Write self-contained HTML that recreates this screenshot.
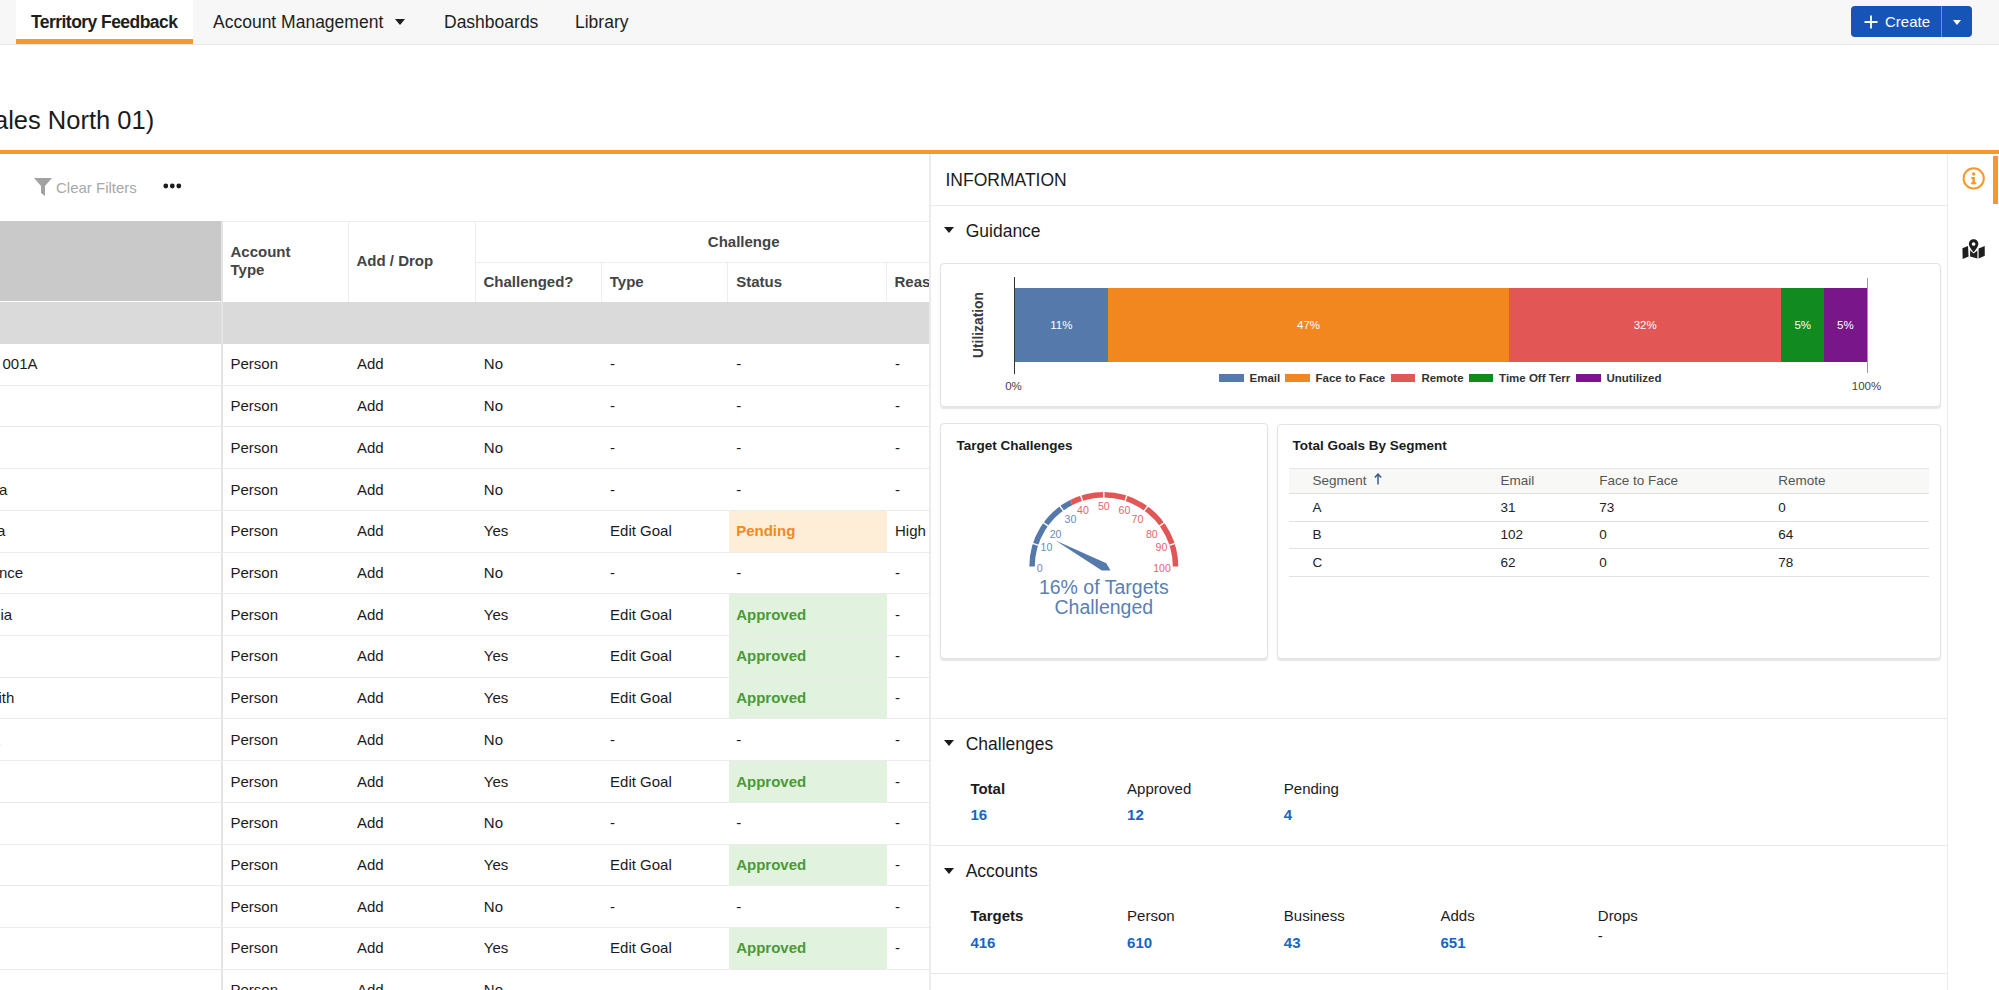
<!DOCTYPE html>
<html><head><meta charset="utf-8">
<style>
*{box-sizing:border-box;margin:0;padding:0}
html,body{width:1999px;height:990px;overflow:hidden;background:#fff;font-family:"Liberation Sans",sans-serif;color:#1b1b1b}
.a{position:absolute;white-space:nowrap}
#nav{position:absolute;left:0;top:0;width:1999px;height:45px;background:#f7f7f7;border-bottom:1px solid #e8e8e8}
.tab{position:absolute;top:0;height:44px;font-size:17.5px;line-height:44px;color:#1e1e1e}
#create{position:absolute;left:1851px;top:6px;width:121px;height:31px;background:#1654b8;border-radius:4px}
.th{font-weight:700;font-size:15px;color:#444}
.td{font-size:15px;color:#1b1b1b}
.hline{position:absolute;height:1px;background:#e6e6e6}
.vline{position:absolute;width:1px;background:#e6e6e6}
.sec{font-size:17.5px;color:#1b1b1b}
.tri{position:absolute;width:0;height:0;border-left:5px solid transparent;border-right:5px solid transparent;border-top:6px solid #1b1b1b}
.card{position:absolute;border:1px solid #e3e3e3;border-radius:4px;background:#fff;box-shadow:0 1.5px 1.5px rgba(0,0,0,.1)}
.lbl{font-size:15px;color:#1b1b1b}
.num{font-size:15px;font-weight:700;color:#1566c8}
</style></head><body>

<!-- NAV -->
<div id="nav">
  <div class="a" style="left:16px;top:0;width:177px;height:44px;background:#fff"></div>
  <div class="a" style="left:16px;top:39px;width:177px;height:5px;background:#f7982e"></div>
  <div class="tab a" style="left:31px;font-weight:700;letter-spacing:-0.55px">Territory Feedback</div>
  <div class="tab a" style="left:213px">Account Management</div>
  <div class="tri" style="left:395px;top:19px"></div>
  <div class="tab a" style="left:444px">Dashboards</div>
  <div class="tab a" style="left:575px">Library</div>
  <div id="create">
    <svg class="a" style="left:13px;top:9px" width="14" height="14" viewBox="0 0 14 14"><path d="M7 0.5V13.5M0.5 7H13.5" stroke="#fff" stroke-width="1.8"/></svg>
    <div class="a" style="left:34px;top:-0.5px;line-height:31px;font-size:15px;color:#fff">Create</div>
    <div class="a" style="left:89.5px;top:0;width:1.5px;height:31px;background:#6a92d4"></div>
    <div class="tri" style="left:102px;top:13.5px;border-top-color:#fff;border-left-width:4.3px;border-right-width:4.3px;border-top-width:5.2px"></div>
  </div>
</div>

<!-- TITLE -->
<div class="a" style="left:-6px;top:104px;font-size:25.5px;line-height:32px;color:#1b1b1b">ales North 01)</div>
<div class="a" style="left:0;top:150px;width:1999px;height:4px;background:#f7982e"></div>

<!-- LEFT PANEL TOOLBAR -->
<svg class="a" style="left:34px;top:178px" width="18" height="18" viewBox="0 0 18 18"><path d="M0 0H18L11 8V18L7 15V8Z" fill="#a2a2a2"/></svg>
<div class="a" style="left:56px;top:178.5px;font-size:15px;line-height:18px;color:#a8a8a8">Clear Filters</div>
<svg class="a" style="left:163px;top:183px" width="19" height="6" viewBox="0 0 19 6"><circle cx="2.8" cy="3" r="2.4" fill="#1b1b1b"/><circle cx="9.3" cy="3" r="2.4" fill="#1b1b1b"/><circle cx="15.8" cy="3" r="2.4" fill="#1b1b1b"/></svg>

<div id="table" class="a" style="left:0;top:0;width:929px;height:990px;overflow:hidden"><div class="a" style="left:0;top:221px;width:221px;height:80px;background:#c9c9c9"></div>
<div class="hline" style="left:222px;top:220.5px;width:707px;height:1.5px;background:#eeeeee"></div>
<div class="a" style="left:0;top:301.5px;width:929px;height:42px;background:#dadada"></div>
<div class="a" style="left:220.5px;top:221px;width:2px;height:769px;background:#e4e4e6"></div>
<div class="vline" style="left:348px;top:221px;height:80.5px;background:#ededed"></div>
<div class="vline" style="left:475px;top:221px;height:80.5px;background:#ededed"></div>
<div class="vline" style="left:601px;top:262px;height:39.5px;background:#ededed"></div>
<div class="vline" style="left:727px;top:262px;height:39.5px;background:#ededed"></div>
<div class="vline" style="left:886px;top:262px;height:39px;background:#ededed"></div>
<div class="hline" style="left:475.3px;top:262px;width:454px;background:#ededed"></div>
<div class="a th" style="left:230.5px;top:243px;line-height:17.7px">Account<br>Type</div>
<div class="a th" style="left:356.5px;top:252px;line-height:18px">Add / Drop</div>
<div class="a th" style="left:707.8px;top:232.8px;line-height:18px">Challenge</div>
<div class="a th" style="left:483.5px;top:272.5px;line-height:18px">Challenged?</div>
<div class="a th" style="left:609.8px;top:272.5px;line-height:18px">Type</div>
<div class="a th" style="left:736.2px;top:272.5px;line-height:18px">Status</div>
<div class="a th" style="left:894.5px;top:272.5px;line-height:18px">Reason</div>
<div class="hline" style="left:0;top:384.72px;width:929px;background:#ebebeb"></div>
<div class="a td" style="left:2.5px;top:355.36px;line-height:18px">001A</div>
<div class="a td" style="left:230.5px;top:355.36px;line-height:18px;">Person</div>
<div class="a td" style="left:357.0px;top:355.36px;line-height:18px;">Add</div>
<div class="a td" style="left:483.8px;top:355.36px;line-height:18px;">No</div>
<div class="a td" style="left:610.1px;top:355.36px;line-height:18px;">-</div>
<div class="a td" style="left:736.2px;top:355.36px;line-height:18px;">-</div>
<div class="a td" style="left:895.0px;top:355.36px;line-height:18px;">-</div>
<div class="hline" style="left:0;top:426.44px;width:929px;background:#ebebeb"></div>
<div class="a td" style="left:230.5px;top:397.08px;line-height:18px;">Person</div>
<div class="a td" style="left:357.0px;top:397.08px;line-height:18px;">Add</div>
<div class="a td" style="left:483.8px;top:397.08px;line-height:18px;">No</div>
<div class="a td" style="left:610.1px;top:397.08px;line-height:18px;">-</div>
<div class="a td" style="left:736.2px;top:397.08px;line-height:18px;">-</div>
<div class="a td" style="left:895.0px;top:397.08px;line-height:18px;">-</div>
<div class="hline" style="left:0;top:468.16px;width:929px;background:#ebebeb"></div>
<div class="a td" style="left:230.5px;top:438.80px;line-height:18px;">Person</div>
<div class="a td" style="left:357.0px;top:438.80px;line-height:18px;">Add</div>
<div class="a td" style="left:483.8px;top:438.80px;line-height:18px;">No</div>
<div class="a td" style="left:610.1px;top:438.80px;line-height:18px;">-</div>
<div class="a td" style="left:736.2px;top:438.80px;line-height:18px;">-</div>
<div class="a td" style="left:895.0px;top:438.80px;line-height:18px;">-</div>
<div class="hline" style="left:0;top:509.88px;width:929px;background:#ebebeb"></div>
<div class="a td" style="left:-1px;top:480.52px;line-height:18px">a</div>
<div class="a td" style="left:230.5px;top:480.52px;line-height:18px;">Person</div>
<div class="a td" style="left:357.0px;top:480.52px;line-height:18px;">Add</div>
<div class="a td" style="left:483.8px;top:480.52px;line-height:18px;">No</div>
<div class="a td" style="left:610.1px;top:480.52px;line-height:18px;">-</div>
<div class="a td" style="left:736.2px;top:480.52px;line-height:18px;">-</div>
<div class="a td" style="left:895.0px;top:480.52px;line-height:18px;">-</div>
<div class="hline" style="left:0;top:551.60px;width:929px;background:#ebebeb"></div>
<div class="a" style="left:728.8px;top:510.88px;width:158.3px;height:40.72px;background:#feeed8"></div>
<div class="a td" style="left:-3px;top:522.24px;line-height:18px">a</div>
<div class="a td" style="left:230.5px;top:522.24px;line-height:18px;">Person</div>
<div class="a td" style="left:357.0px;top:522.24px;line-height:18px;">Add</div>
<div class="a td" style="left:483.8px;top:522.24px;line-height:18px;">Yes</div>
<div class="a td" style="left:610.1px;top:522.24px;line-height:18px;">Edit Goal</div>
<div class="a td" style="left:736.2px;top:522.24px;line-height:18px;font-weight:700;color:#f08a1e;">Pending</div>
<div class="a td" style="left:895.0px;top:522.24px;line-height:18px;">High</div>
<div class="hline" style="left:0;top:593.32px;width:929px;background:#ebebeb"></div>
<div class="a td" style="left:-1px;top:563.96px;line-height:18px">nce</div>
<div class="a td" style="left:230.5px;top:563.96px;line-height:18px;">Person</div>
<div class="a td" style="left:357.0px;top:563.96px;line-height:18px;">Add</div>
<div class="a td" style="left:483.8px;top:563.96px;line-height:18px;">No</div>
<div class="a td" style="left:610.1px;top:563.96px;line-height:18px;">-</div>
<div class="a td" style="left:736.2px;top:563.96px;line-height:18px;">-</div>
<div class="a td" style="left:895.0px;top:563.96px;line-height:18px;">-</div>
<div class="hline" style="left:0;top:635.04px;width:929px;background:#ebebeb"></div>
<div class="a" style="left:728.8px;top:594.32px;width:158.3px;height:40.72px;background:#e1f2de"></div>
<div class="a td" style="left:0.4px;top:605.68px;line-height:18px">ia</div>
<div class="a td" style="left:230.5px;top:605.68px;line-height:18px;">Person</div>
<div class="a td" style="left:357.0px;top:605.68px;line-height:18px;">Add</div>
<div class="a td" style="left:483.8px;top:605.68px;line-height:18px;">Yes</div>
<div class="a td" style="left:610.1px;top:605.68px;line-height:18px;">Edit Goal</div>
<div class="a td" style="left:736.2px;top:605.68px;line-height:18px;font-weight:700;color:#4a9a38;">Approved</div>
<div class="a td" style="left:895.0px;top:605.68px;line-height:18px;">-</div>
<div class="hline" style="left:0;top:676.76px;width:929px;background:#ebebeb"></div>
<div class="a" style="left:728.8px;top:636.04px;width:158.3px;height:40.72px;background:#e1f2de"></div>
<div class="a td" style="left:230.5px;top:647.40px;line-height:18px;">Person</div>
<div class="a td" style="left:357.0px;top:647.40px;line-height:18px;">Add</div>
<div class="a td" style="left:483.8px;top:647.40px;line-height:18px;">Yes</div>
<div class="a td" style="left:610.1px;top:647.40px;line-height:18px;">Edit Goal</div>
<div class="a td" style="left:736.2px;top:647.40px;line-height:18px;font-weight:700;color:#4a9a38;">Approved</div>
<div class="a td" style="left:895.0px;top:647.40px;line-height:18px;">-</div>
<div class="hline" style="left:0;top:718.48px;width:929px;background:#ebebeb"></div>
<div class="a" style="left:728.8px;top:677.76px;width:158.3px;height:40.72px;background:#e1f2de"></div>
<div class="a td" style="left:-1.5px;top:689.12px;line-height:18px">ith</div>
<div class="a td" style="left:230.5px;top:689.12px;line-height:18px;">Person</div>
<div class="a td" style="left:357.0px;top:689.12px;line-height:18px;">Add</div>
<div class="a td" style="left:483.8px;top:689.12px;line-height:18px;">Yes</div>
<div class="a td" style="left:610.1px;top:689.12px;line-height:18px;">Edit Goal</div>
<div class="a td" style="left:736.2px;top:689.12px;line-height:18px;font-weight:700;color:#4a9a38;">Approved</div>
<div class="a td" style="left:895.0px;top:689.12px;line-height:18px;">-</div>
<div class="hline" style="left:0;top:760.20px;width:929px;background:#ebebeb"></div>
<div class="a td" style="left:-3px;top:730.84px;line-height:18px">.</div>
<div class="a td" style="left:230.5px;top:730.84px;line-height:18px;">Person</div>
<div class="a td" style="left:357.0px;top:730.84px;line-height:18px;">Add</div>
<div class="a td" style="left:483.8px;top:730.84px;line-height:18px;">No</div>
<div class="a td" style="left:610.1px;top:730.84px;line-height:18px;">-</div>
<div class="a td" style="left:736.2px;top:730.84px;line-height:18px;">-</div>
<div class="a td" style="left:895.0px;top:730.84px;line-height:18px;">-</div>
<div class="hline" style="left:0;top:801.92px;width:929px;background:#ebebeb"></div>
<div class="a" style="left:728.8px;top:761.20px;width:158.3px;height:40.72px;background:#e1f2de"></div>
<div class="a td" style="left:230.5px;top:772.56px;line-height:18px;">Person</div>
<div class="a td" style="left:357.0px;top:772.56px;line-height:18px;">Add</div>
<div class="a td" style="left:483.8px;top:772.56px;line-height:18px;">Yes</div>
<div class="a td" style="left:610.1px;top:772.56px;line-height:18px;">Edit Goal</div>
<div class="a td" style="left:736.2px;top:772.56px;line-height:18px;font-weight:700;color:#4a9a38;">Approved</div>
<div class="a td" style="left:895.0px;top:772.56px;line-height:18px;">-</div>
<div class="hline" style="left:0;top:843.64px;width:929px;background:#ebebeb"></div>
<div class="a td" style="left:230.5px;top:814.28px;line-height:18px;">Person</div>
<div class="a td" style="left:357.0px;top:814.28px;line-height:18px;">Add</div>
<div class="a td" style="left:483.8px;top:814.28px;line-height:18px;">No</div>
<div class="a td" style="left:610.1px;top:814.28px;line-height:18px;">-</div>
<div class="a td" style="left:736.2px;top:814.28px;line-height:18px;">-</div>
<div class="a td" style="left:895.0px;top:814.28px;line-height:18px;">-</div>
<div class="hline" style="left:0;top:885.36px;width:929px;background:#ebebeb"></div>
<div class="a" style="left:728.8px;top:844.64px;width:158.3px;height:40.72px;background:#e1f2de"></div>
<div class="a td" style="left:230.5px;top:856.00px;line-height:18px;">Person</div>
<div class="a td" style="left:357.0px;top:856.00px;line-height:18px;">Add</div>
<div class="a td" style="left:483.8px;top:856.00px;line-height:18px;">Yes</div>
<div class="a td" style="left:610.1px;top:856.00px;line-height:18px;">Edit Goal</div>
<div class="a td" style="left:736.2px;top:856.00px;line-height:18px;font-weight:700;color:#4a9a38;">Approved</div>
<div class="a td" style="left:895.0px;top:856.00px;line-height:18px;">-</div>
<div class="hline" style="left:0;top:927.08px;width:929px;background:#ebebeb"></div>
<div class="a td" style="left:230.5px;top:897.72px;line-height:18px;">Person</div>
<div class="a td" style="left:357.0px;top:897.72px;line-height:18px;">Add</div>
<div class="a td" style="left:483.8px;top:897.72px;line-height:18px;">No</div>
<div class="a td" style="left:610.1px;top:897.72px;line-height:18px;">-</div>
<div class="a td" style="left:736.2px;top:897.72px;line-height:18px;">-</div>
<div class="a td" style="left:895.0px;top:897.72px;line-height:18px;">-</div>
<div class="hline" style="left:0;top:968.80px;width:929px;background:#ebebeb"></div>
<div class="a" style="left:728.8px;top:928.08px;width:158.3px;height:40.72px;background:#e1f2de"></div>
<div class="a td" style="left:230.5px;top:939.44px;line-height:18px;">Person</div>
<div class="a td" style="left:357.0px;top:939.44px;line-height:18px;">Add</div>
<div class="a td" style="left:483.8px;top:939.44px;line-height:18px;">Yes</div>
<div class="a td" style="left:610.1px;top:939.44px;line-height:18px;">Edit Goal</div>
<div class="a td" style="left:736.2px;top:939.44px;line-height:18px;font-weight:700;color:#4a9a38;">Approved</div>
<div class="a td" style="left:895.0px;top:939.44px;line-height:18px;">-</div>
<div class="hline" style="left:0;top:1010.52px;width:929px;background:#ebebeb"></div>
<div class="a td" style="left:230.5px;top:981.16px;line-height:18px;">Person</div>
<div class="a td" style="left:357.0px;top:981.16px;line-height:18px;">Add</div>
<div class="a td" style="left:483.8px;top:981.16px;line-height:18px;">No</div>
<div class="a td" style="left:610.1px;top:981.16px;line-height:18px;">-</div>
<div class="a td" style="left:736.2px;top:981.16px;line-height:18px;">-</div>
<div class="a td" style="left:895.0px;top:981.16px;line-height:18px;">-</div></div>

<!-- RIGHT PANEL -->
<div class="a" style="left:929px;top:154px;width:1.5px;height:836px;background:#ececec"></div>
<div class="a" style="left:930.5px;top:205px;width:1017px;height:1px;background:#ebebeb"></div>
<div class="a" style="left:1947px;top:154px;width:1px;height:836px;background:#ececec"></div>
<div class="a" style="left:945.50px;top:169.94px;font-size:17.5px;line-height:20px;color:#1b1b1b">INFORMATION</div>
<div class="tri" style="left:944px;top:226.7px;border-left-width:5.2px;border-right-width:5.2px;border-top-width:6.3px"></div>
<div class="a" style="left:965.70px;top:220.64px;font-size:17.5px;line-height:20px;">Guidance</div>
<div class="card" style="left:940.4px;top:263.2px;width:1001px;height:144px"></div>
<div class="a" style="left:1014px;top:277.4px;width:1px;height:96.2px;background:#333"></div>
<div class="a" style="left:1866.8px;top:278.4px;width:1px;height:94.6px;background:#9a9a9a"></div>
<div class="a" style="left:1014.60px;top:287.7px;width:93.60px;height:74.5px;background:#5579ab"></div>
<div class="a" style="left:761.40px;width:600px;text-align:center;top:318.02px;font-size:11.5px;line-height:14px;color:#fff">11%</div>
<div class="a" style="left:1108.20px;top:287.7px;width:400.70px;height:74.5px;background:#f2871f"></div>
<div class="a" style="left:1008.55px;width:600px;text-align:center;top:318.02px;font-size:11.5px;line-height:14px;color:#fff">47%</div>
<div class="a" style="left:1508.90px;top:287.7px;width:272.50px;height:74.5px;background:#e25656"></div>
<div class="a" style="left:1345.15px;width:600px;text-align:center;top:318.02px;font-size:11.5px;line-height:14px;color:#fff">32%</div>
<div class="a" style="left:1781.40px;top:287.7px;width:42.60px;height:74.5px;background:#118a1f"></div>
<div class="a" style="left:1502.70px;width:600px;text-align:center;top:318.02px;font-size:11.5px;line-height:14px;color:#fff">5%</div>
<div class="a" style="left:1824.00px;top:287.7px;width:42.60px;height:74.5px;background:#79168a"></div>
<div class="a" style="left:1545.30px;width:600px;text-align:center;top:318.02px;font-size:11.5px;line-height:14px;color:#fff">5%</div>
<div class="a" style="left:713.50px;width:600px;text-align:center;top:379.02px;font-size:11.5px;line-height:14px;color:#444">0%</div>
<div class="a" style="left:1566.50px;width:600px;text-align:center;top:379.02px;font-size:11.5px;line-height:14px;color:#444">100%</div>
<div class="a" style="left:1219px;top:374.3px;width:24.5px;height:7.5px;background:#5579ab"></div>
<div class="a" style="left:1249.50px;top:371.02px;font-size:11.5px;line-height:14px;font-weight:700;color:#333">Email</div>
<div class="a" style="left:1285px;top:374.3px;width:24.5px;height:7.5px;background:#f2871f"></div>
<div class="a" style="left:1315.50px;top:371.02px;font-size:11.5px;line-height:14px;font-weight:700;color:#333">Face to Face</div>
<div class="a" style="left:1390.9px;top:374.3px;width:24.5px;height:7.5px;background:#e25656"></div>
<div class="a" style="left:1421.40px;top:371.02px;font-size:11.5px;line-height:14px;font-weight:700;color:#333">Remote</div>
<div class="a" style="left:1468.6px;top:374.3px;width:24.5px;height:7.5px;background:#118a1f"></div>
<div class="a" style="left:1499.10px;top:371.02px;font-size:11.5px;line-height:14px;font-weight:700;color:#333">Time Off Terr</div>
<div class="a" style="left:1576px;top:374.3px;width:24.5px;height:7.5px;background:#79168a"></div>
<div class="a" style="left:1606.50px;top:371.02px;font-size:11.5px;line-height:14px;font-weight:700;color:#333">Unutilized</div>
<div class="a" style="left:928.5px;top:315.5px;width:100px;height:18px;text-align:center;font-size:13.8px;line-height:18px;font-weight:700;color:#3a3a3a;transform:rotate(-90deg)">Utilization</div>
<div class="card" style="left:940px;top:423px;width:328px;height:236px"></div>
<div class="a" style="left:956.50px;top:438.12px;font-size:13.5px;line-height:16px;font-weight:700;color:#1b1b1b">Target Challenges</div>
<svg class="a" style="left:940px;top:423px" width="327" height="236" viewBox="0 0 327 236"><path d="M92.05 143.50 A71.75 71.75 0 0 1 131.23 79.57" stroke="#5579ab" stroke-width="5.5" fill="none"/><path d="M131.23 79.57 A71.75 71.75 0 0 1 235.55 143.50" stroke="#e25656" stroke-width="5.5" fill="none"/><line x1="99.37" y1="122.56" x2="91.76" y2="120.09" stroke="#fff" stroke-width="1.4"/><line x1="108.99" y1="103.68" x2="102.52" y2="98.98" stroke="#fff" stroke-width="1.4"/><line x1="123.98" y1="88.69" x2="119.28" y2="82.22" stroke="#fff" stroke-width="1.4"/><line x1="142.86" y1="79.07" x2="140.39" y2="71.46" stroke="#fff" stroke-width="1.4"/><line x1="163.80" y1="75.75" x2="163.80" y2="67.75" stroke="#fff" stroke-width="1.4"/><line x1="184.74" y1="79.07" x2="187.21" y2="71.46" stroke="#fff" stroke-width="1.4"/><line x1="203.62" y1="88.69" x2="208.32" y2="82.22" stroke="#fff" stroke-width="1.4"/><line x1="218.61" y1="103.68" x2="225.08" y2="98.98" stroke="#fff" stroke-width="1.4"/><line x1="228.23" y1="122.56" x2="235.84" y2="120.09" stroke="#fff" stroke-width="1.4"/><polygon points="115.50,117.60 166.30,140.20 170.50,147.50 161.80,147.50" fill="#5579ab"/><text x="99.80" y="148.50" text-anchor="middle" font-family="Liberation Sans" font-size="10.6" fill="#6a8cbd">0</text><text x="106.50" y="128.10" text-anchor="middle" font-family="Liberation Sans" font-size="10.6" fill="#6a8cbd">10</text><text x="115.60" y="114.90" text-anchor="middle" font-family="Liberation Sans" font-size="10.6" fill="#6a8cbd">20</text><text x="130.50" y="99.90" text-anchor="middle" font-family="Liberation Sans" font-size="10.6" fill="#6a8cbd">30</text><text x="142.90" y="90.50" text-anchor="middle" font-family="Liberation Sans" font-size="10.6" fill="#e46767">40</text><text x="163.80" y="87.20" text-anchor="middle" font-family="Liberation Sans" font-size="10.6" fill="#e46767">50</text><text x="184.40" y="90.50" text-anchor="middle" font-family="Liberation Sans" font-size="10.6" fill="#e46767">60</text><text x="197.50" y="99.90" text-anchor="middle" font-family="Liberation Sans" font-size="10.6" fill="#e46767">70</text><text x="211.80" y="114.90" text-anchor="middle" font-family="Liberation Sans" font-size="10.6" fill="#e46767">80</text><text x="221.40" y="128.10" text-anchor="middle" font-family="Liberation Sans" font-size="10.6" fill="#e46767">90</text><text x="222.00" y="148.50" text-anchor="middle" font-family="Liberation Sans" font-size="10.6" fill="#e46767">100</text></svg>
<div class="a" style="left:803.80px;width:600px;text-align:center;top:577.44px;font-size:19.5px;line-height:20px;color:#5a7fb3">16% of Targets</div>
<div class="a" style="left:803.80px;width:600px;text-align:center;top:596.84px;font-size:19.5px;line-height:20px;color:#5a7fb3">Challenged</div>
<div class="card" style="left:1276.8px;top:423.5px;width:664px;height:235px"></div>
<div class="a" style="left:1292.40px;top:438.32px;font-size:13.5px;line-height:16px;font-weight:700;color:#1b1b1b">Total Goals By Segment</div>
<div class="a" style="left:1288.7px;top:467.8px;width:640px;height:26.3px;background:#f8f8f6;border-top:1px solid #e6e6e6;border-bottom:1px solid #e0e0e0"></div>
<div class="a" style="left:1312.50px;top:472.92px;font-size:13.5px;line-height:16px;color:#555">Segment</div>
<div class="a" style="left:1500.60px;top:472.92px;font-size:13.5px;line-height:16px;color:#555">Email</div>
<div class="a" style="left:1599.30px;top:472.92px;font-size:13.5px;line-height:16px;color:#555">Face to Face</div>
<div class="a" style="left:1778.20px;top:472.92px;font-size:13.5px;line-height:16px;color:#555">Remote</div>
<svg class="a" style="left:1372.5px;top:473px" width="10" height="12" viewBox="0 0 10 12"><path d="M5 1.2V11.5M1.8 4.6L5 1.2L8.2 4.6" stroke="#3b5a91" stroke-width="1.5" fill="none"/></svg>
<div class="a" style="left:1312.50px;top:499.92px;font-size:13.5px;line-height:16px;color:#222">A</div>
<div class="a" style="left:1500.60px;top:499.92px;font-size:13.5px;line-height:16px;color:#222">31</div>
<div class="a" style="left:1599.30px;top:499.92px;font-size:13.5px;line-height:16px;color:#222">73</div>
<div class="a" style="left:1778.20px;top:499.92px;font-size:13.5px;line-height:16px;color:#222">0</div>
<div class="a" style="left:1288.7px;top:520.60px;width:640px;height:1px;background:#e2e2e2"></div>
<div class="a" style="left:1312.50px;top:527.42px;font-size:13.5px;line-height:16px;color:#222">B</div>
<div class="a" style="left:1500.60px;top:527.42px;font-size:13.5px;line-height:16px;color:#222">102</div>
<div class="a" style="left:1599.30px;top:527.42px;font-size:13.5px;line-height:16px;color:#222">0</div>
<div class="a" style="left:1778.20px;top:527.42px;font-size:13.5px;line-height:16px;color:#222">64</div>
<div class="a" style="left:1288.7px;top:548.10px;width:640px;height:1px;background:#e2e2e2"></div>
<div class="a" style="left:1312.50px;top:554.92px;font-size:13.5px;line-height:16px;color:#222">C</div>
<div class="a" style="left:1500.60px;top:554.92px;font-size:13.5px;line-height:16px;color:#222">62</div>
<div class="a" style="left:1599.30px;top:554.92px;font-size:13.5px;line-height:16px;color:#222">0</div>
<div class="a" style="left:1778.20px;top:554.92px;font-size:13.5px;line-height:16px;color:#222">78</div>
<div class="a" style="left:1288.7px;top:575.60px;width:640px;height:1px;background:#e2e2e2"></div>
<div class="a" style="left:930.5px;top:718px;width:1017px;height:1px;background:#ebebeb"></div>
<div class="tri" style="left:944px;top:740px;border-left-width:5.2px;border-right-width:5.2px;border-top-width:6.3px"></div>
<div class="a" style="left:965.70px;top:734.44px;font-size:17.5px;line-height:20px;">Challenges</div>
<div class="a" style="left:970.40px;top:780.10px;font-size:15px;line-height:18px;font-weight:700;">Total</div>
<div class="a" style="left:970.40px;top:806.10px;font-size:15px;line-height:18px;font-weight:700;color:#1566c8">16</div>
<div class="a" style="left:1127.10px;top:780.10px;font-size:15px;line-height:18px;">Approved</div>
<div class="a" style="left:1127.10px;top:806.10px;font-size:15px;line-height:18px;font-weight:700;color:#1566c8">12</div>
<div class="a" style="left:1283.80px;top:780.10px;font-size:15px;line-height:18px;">Pending</div>
<div class="a" style="left:1283.80px;top:806.10px;font-size:15px;line-height:18px;font-weight:700;color:#1566c8">4</div>
<div class="a" style="left:930.5px;top:845px;width:1017px;height:1px;background:#ebebeb"></div>
<div class="tri" style="left:944px;top:868px;border-left-width:5.2px;border-right-width:5.2px;border-top-width:6.3px"></div>
<div class="a" style="left:965.70px;top:861.44px;font-size:17.5px;line-height:20px;">Accounts</div>
<div class="a" style="left:970.40px;top:906.60px;font-size:15px;line-height:18px;font-weight:700;">Targets</div>
<div class="a" style="left:970.40px;top:933.60px;font-size:15px;line-height:18px;font-weight:700;color:#1566c8">416</div>
<div class="a" style="left:1127.10px;top:906.60px;font-size:15px;line-height:18px;">Person</div>
<div class="a" style="left:1127.10px;top:933.60px;font-size:15px;line-height:18px;font-weight:700;color:#1566c8">610</div>
<div class="a" style="left:1283.80px;top:906.60px;font-size:15px;line-height:18px;">Business</div>
<div class="a" style="left:1283.80px;top:933.60px;font-size:15px;line-height:18px;font-weight:700;color:#1566c8">43</div>
<div class="a" style="left:1440.50px;top:906.60px;font-size:15px;line-height:18px;">Adds</div>
<div class="a" style="left:1440.50px;top:933.60px;font-size:15px;line-height:18px;font-weight:700;color:#1566c8">651</div>
<div class="a" style="left:1597.80px;top:907.20px;font-size:15px;line-height:18px;">Drops</div>
<div class="a" style="left:1597.80px;top:926.80px;font-size:15px;line-height:18px;">-</div>
<div class="a" style="left:930.5px;top:973px;width:1017px;height:1px;background:#ebebeb"></div>
<svg class="a" style="left:1962px;top:166px" width="24" height="24" viewBox="0 0 24 24"><circle cx="11.7" cy="12.4" r="10.1" stroke="#f7982e" stroke-width="2" fill="none"/><circle cx="11.7" cy="8.1" r="1.75" fill="#f7982e"/><path d="M9.3 10.9H12.9V16.2H14.3V18.3H9.1V16.2H10.4V12.9H9.3Z" fill="#f7982e"/></svg>
<div class="a" style="left:1992.5px;top:155.5px;width:5.5px;height:48.2px;background:#f7982e"></div>
<svg class="a" style="left:1958px;top:234px" width="32" height="30" viewBox="0 0 32 30"><path d="M4.4 14.2L10 12.1 10.6 22.4 4.7 25Z M12.1 16.2L15.6 19.4 19.4 16.4V24.6L12.1 22.4Z M20.6 14.6L26.7 12 26.8 21.8 20.6 24.6Z" fill="#1e1e1e"/><path d="M15.6 5.2C12.9 5.2 10.9 7.3 10.9 9.9 10.9 12.8 15.6 18.3 15.6 18.3S20.3 12.8 20.3 9.9C20.3 7.3 18.3 5.2 15.6 5.2Z" fill="#1e1e1e"/><circle cx="15.6" cy="10" r="1.85" fill="#fff"/></svg>

</body></html>
